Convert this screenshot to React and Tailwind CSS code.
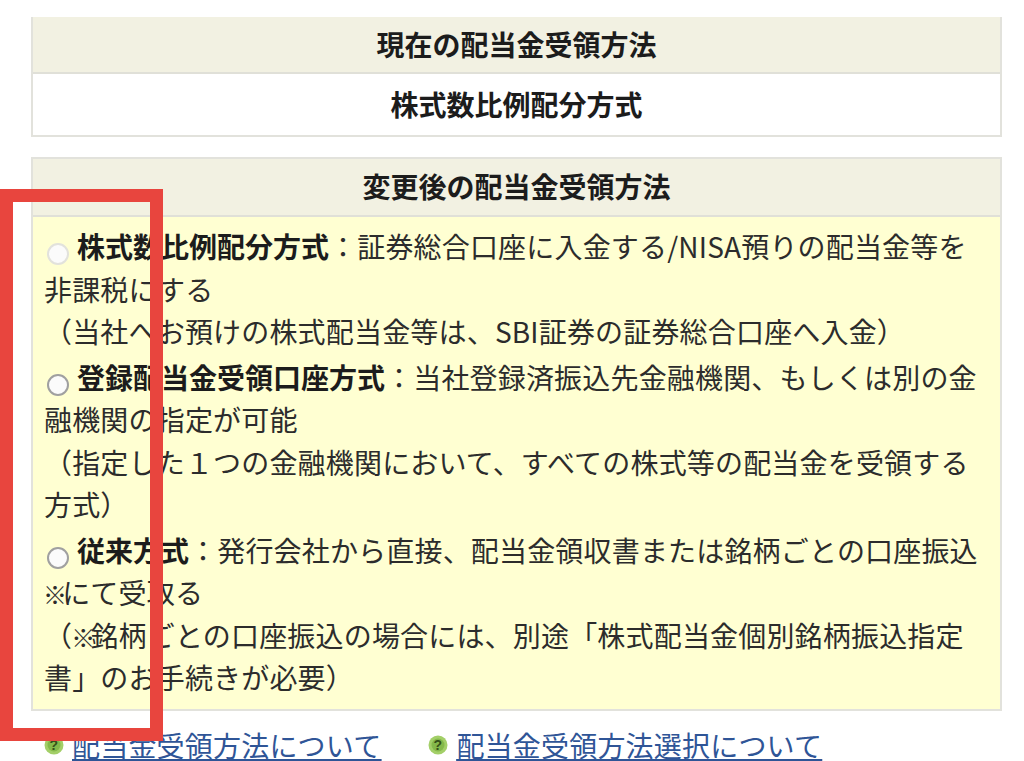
function Radio({ faded }) {
  return (
    <span
      className={`inline-block align-[-7px] w-[22px] h-[22px] rounded-full border-2 bg-[#fbfbfb] mr-[8px] ml-[3px] ${
        faded ? "border-[#e2e2dc]" : "border-[#a0a0a0]"
      }`}
    />
  );
}

function Help() {
  return (
    <svg width="20" height="20" viewBox="0 0 20 20" className="shrink-0">
      <circle cx="10" cy="10" r="9.5" fill="#a3cf68" />
      <circle cx="10" cy="10" r="6.5" fill="#84b84a" />
      <text x="10" y="15" textAnchor="middle" fontSize="14" fontWeight="700" fill="#35501a" fontFamily="'Liberation Sans', sans-serif">?</text>
    </svg>
  );
}

function Head({ tall, children }) {
  return (
    <div className={`${tall ? "h-[58px]" : "h-[57px]"} pb-[2px] flex items-center justify-center bg-[#f2f1e2] border-b-2 border-[#e0e0d8] text-[28px] leading-[40px] font-bold text-[#1c1c1c]`}>
      {children}
    </div>
  );
}

function Bold({ children }) {
  return <b className="text-[#1c1c1c] tracking-normal">{children}</b>;
}

function Mark() {
  return <span className="inline-block text-[24px] leading-none font-bold -ml-[1px] -mr-[5px]">※</span>;
}

export default function App() {
  return (
    <div className="relative w-[1024px] h-[761px] overflow-hidden bg-white text-[#2c2c2c] font-['Noto_Sans_CJK_JP','Noto_Sans',sans-serif]">
      <div className="pt-[17px] pl-[31px] pr-[22px]">
        <div className="border-2 border-[#e2e2dc] border-t-0">
          <Head>現在の配当金受領方法</Head>
          <div className="h-[61px] pb-[2px] flex items-center justify-center text-[28px] leading-[40px] font-bold text-[#1c1c1c]">
            株式数比例配分方式
          </div>
        </div>

        <div className="mt-[20px] border-2 border-[#e2e2dc]">
          <Head tall>変更後の配当金受領方法</Head>
          <div className="bg-[#ffffd2] h-[492px] pl-[11px] pr-[15px] pt-[8px] text-[28px] leading-[42.5px] tracking-[0.18px]">
            <p>
              <Radio faded />
              <Bold>株式数比例配分方式</Bold>：証券総合口座に入金する/NISA預りの配当金等を非課税にする
              <br />
              （当社へお預けの株式配当金等は、SBI証券の証券総合口座へ入金）
            </p>
            <p className="mt-[3px]">
              <Radio />
              <Bold>登録配当金受領口座方式</Bold>：当社登録済振込先金融機関、もしくは別の金融機関の指定が可能
              <br />
              （指定した１つの金融機関において、すべての株式等の配当金を受領する方式）
            </p>
            <p className="mt-[3px]">
              <Radio />
              <Bold>従来方式</Bold>：発行会社から直接、配当金領収書または銘柄ごとの口座振込
              <Mark />にて受取る
              <br />
              （<Mark />銘柄ごとの口座振込の場合には、別途「株式配当金個別銘柄振込指定書」のお手続きが必要）
            </p>
          </div>
        </div>

        <div className="mt-[14px] flex items-center pl-[13px] text-[28px] leading-[40px] tracking-[0.2px] text-[#2f5597] underline">
          <Help />
          <a className="ml-[8px]">配当金受領方法について</a>
          <span className="ml-[47px] mr-[8px] flex"><Help /></span>
          <a>配当金受領方法選択について</a>
        </div>
      </div>

      <div className="absolute left-0 top-[189px] w-[163px] h-[552px] border-[13px] border-[#e8453e]" />
    </div>
  );
}
